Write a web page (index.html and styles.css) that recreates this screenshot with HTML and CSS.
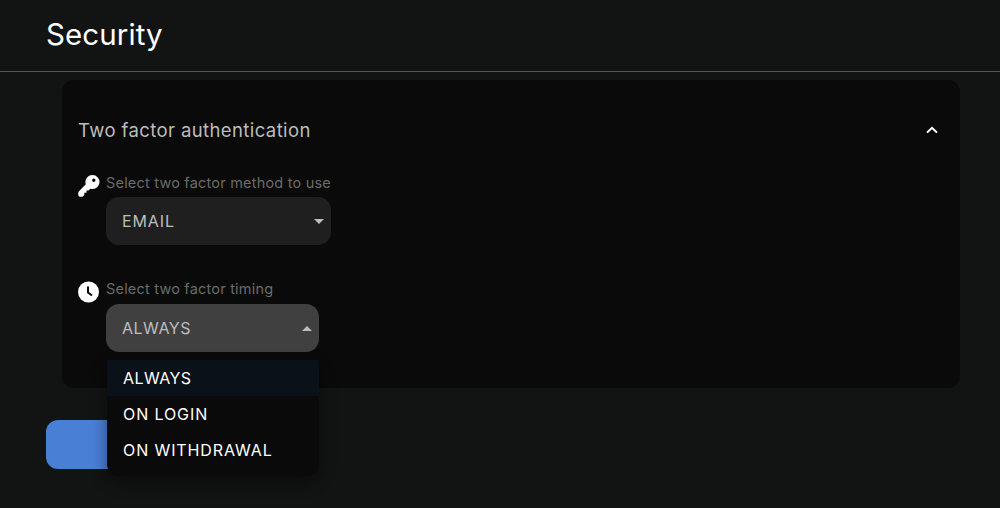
FILE: index.html
```html
<!DOCTYPE html>
<html lang="en">
<head>
<meta charset="utf-8">
<title>Security</title>
<link rel="stylesheet" href="styles.css">
</head>
<body>
<header class="page-header"><h1 class="page-title">Security</h1></header>
<main class="content">
  <section class="card">
    <div class="card-head">
      <h2 class="card-title">Two factor authentication</h2>
      <svg class="chevron" width="14" height="10" viewBox="0 0 14 10"><path d="M2 7.600 7 2.800l5 4.800" fill="none" stroke="#fff" stroke-width="2"/></svg>
    </div>
    <div class="field field-method">
      <svg class="field-icon" width="22" height="22" viewBox="0 0 22 22"><path fill="#fff" fill-rule="evenodd" d="M14.500 0a7 7 0 1 1-2.200 13.650L10.500 15.500H8.500v2.200H6.300v2.200L4.500 21.700H1.500L.3 20.500V17l7.500-7.700A7 7 0 0 1 14.500 0Zm1.300 3.500a1.700 1.700 0 1 0 0 3.400 1.700 1.700 0 0 0 0-3.400Z"/></svg>
      <div class="field-body">
        <label class="field-label">Select two factor method to use</label>
        <div class="select select-method"><span>EMAIL</span><i class="caret caret-down"></i></div>
      </div>
    </div>
    <div class="field">
      <svg class="field-icon" width="22" height="22" viewBox="0 0 22 22"><circle cx="10.500" cy="11" r="10.500" fill="#fff"/><path d="M10 5.500v6l4 3" fill="none" stroke="#0a0a0a" stroke-width="2"/></svg>
      <div class="field-body">
        <label class="field-label">Select two factor timing</label>
        <div class="select select-timing"><span>ALWAYS</span><i class="caret caret-up"></i></div>
      </div>
    </div>
  </section>
  <button class="submit" type="button"></button>
</main>
<ul class="menu">
  <li class="menu-item menu-item-active">ALWAYS</li>
  <li class="menu-item">ON LOGIN</li>
  <li class="menu-item">ON WITHDRAWAL</li>
</ul>
</body>
</html>
```
FILE: styles.css
```css
* { box-sizing: border-box; }
html, body { margin: 0; height: 508px; overflow: hidden; }
body {
  background: #121414;
  color: #fff;
  font-family: "Inter", "Liberation Sans", sans-serif;
  position: relative;
}
.page-header {
  height: 72px;
  padding: 16px 46px 0;
  border-bottom: 1px solid #565656;
}
.page-title {
  margin: 0;
  font-size: 29.500px;
  line-height: 36px;
  font-weight: 400;
  letter-spacing: 0.1px;
}
.content { padding: 8px 40px 0 46px; }
.card {
  margin-left: 16px;
  height: 308px;
  background: #0a0a0a;
  border-radius: 12px;
  padding: 0 16px;
}
.card-head {
  height: 94px;
  display: flex;
  align-items: center;
  justify-content: space-between;
  padding: 6px 5px 0 0;
}
.card-title {
  margin: 0;
  font-size: 18.500px;
  font-weight: 400;
  letter-spacing: 0.4px;
  color: #bdbdbd;
}
.field { display: flex; gap: 6px; align-items: flex-start; }
.field-method { height: 106px; }
.field-icon { margin-top: 1px; flex: none; }
.field-body { display: flex; flex-direction: column; }
.field-label {
  font-size: 14.500px;
  line-height: 18px;
  letter-spacing: 0.2px;
  color: #6b6b6b;
  margin-bottom: 5px;
}
.select {
  height: 48px;
  border-radius: 13px;
  padding: 0 7px 0 16px;
  display: flex;
  align-items: center;
  justify-content: space-between;
  font-size: 16px;
  letter-spacing: 0.5px;
  color: #bdbdbd;
}
.select-method { width: 225px; background: #1f1f1f; }
.select-timing { width: 213px; margin-top: 1px; background: #404040; }
.select-method span { letter-spacing: 0.9px; }
.caret { width: 0; height: 0; border-left: 5px solid transparent; border-right: 5px solid transparent; }
.caret-down { border-top: 5px solid #bdbdbd; }
.caret-up { border-bottom: 5px solid #bdbdbd; }
.submit {
  display: block;
  margin-top: 32px;
  width: 180px;
  height: 49px;
  border: 0;
  border-radius: 12px;
  background: #4a7fd6;
}
.menu {
  position: absolute;
  left: 107px;
  top: 360px;
  width: 212px;
  height: 116px;
  margin: 0;
  padding: 0;
  list-style: none;
  background: #0a0a0a;
  border-radius: 0 0 12px 12px;
  box-shadow: 0 6px 16px rgba(0,0,0,.45);
}
.menu-item {
  height: 36px;
  padding: 0 16px;
  display: flex;
  align-items: center;
  font-size: 16px;
  letter-spacing: 0.9px;
  color: #fff;
}
.menu-item-active { background: #0b1118; letter-spacing: 0.4px; }
```
